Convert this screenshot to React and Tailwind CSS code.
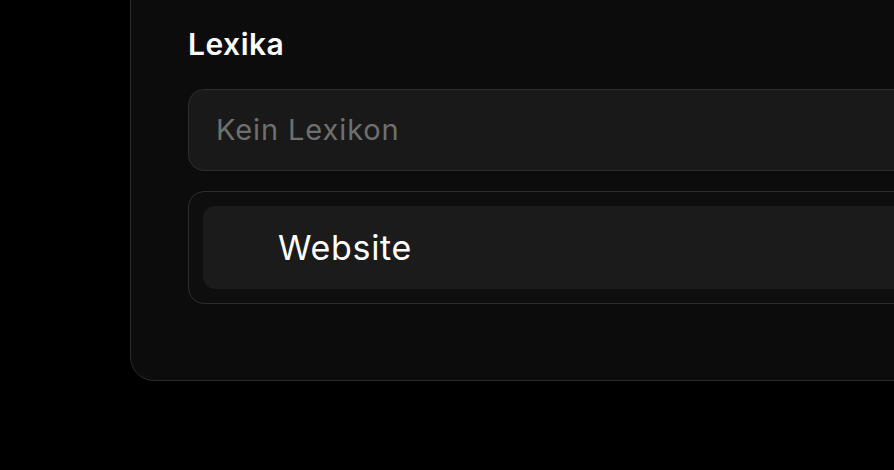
import React from 'react'

const LexikaPanel = () => {
  return (
    <div className="ml-[130px] -mt-[40px] w-[900px] rounded-[24px] border border-[#2a2a2a] bg-[#0c0c0c] pl-[57px] pt-[65px] pb-[76px]">
      <h2 className="text-[30px] leading-[36px] font-semibold text-white tracking-[0.5px]">
        Lexika
      </h2>

      <div className="mt-[27px] flex h-[82px] items-center rounded-[16px] border border-[#2e2e2e] bg-[#191919] pl-[27px]">
        <span className="text-[29px] tracking-[0.9px] text-[#6f6f6f]">Kein Lexikon</span>
      </div>

      <div className="mt-[20px] rounded-[16px] border border-[#2e2e2e] bg-[#0e0e0e] p-[14px]">
        <div className="flex h-[83px] items-center rounded-[12px] bg-[#1b1b1b] pl-[75px]">
          <span className="text-[34px] tracking-[0.7px] text-white">Website</span>
        </div>
      </div>
    </div>
  )
}

export default function App() {
  return (
    <div
      className="h-[470px] w-[894px] overflow-hidden bg-black"
      style={{ fontFamily: 'Inter, "Noto Sans", sans-serif' }}
    >
      <LexikaPanel />
    </div>
  )
}
